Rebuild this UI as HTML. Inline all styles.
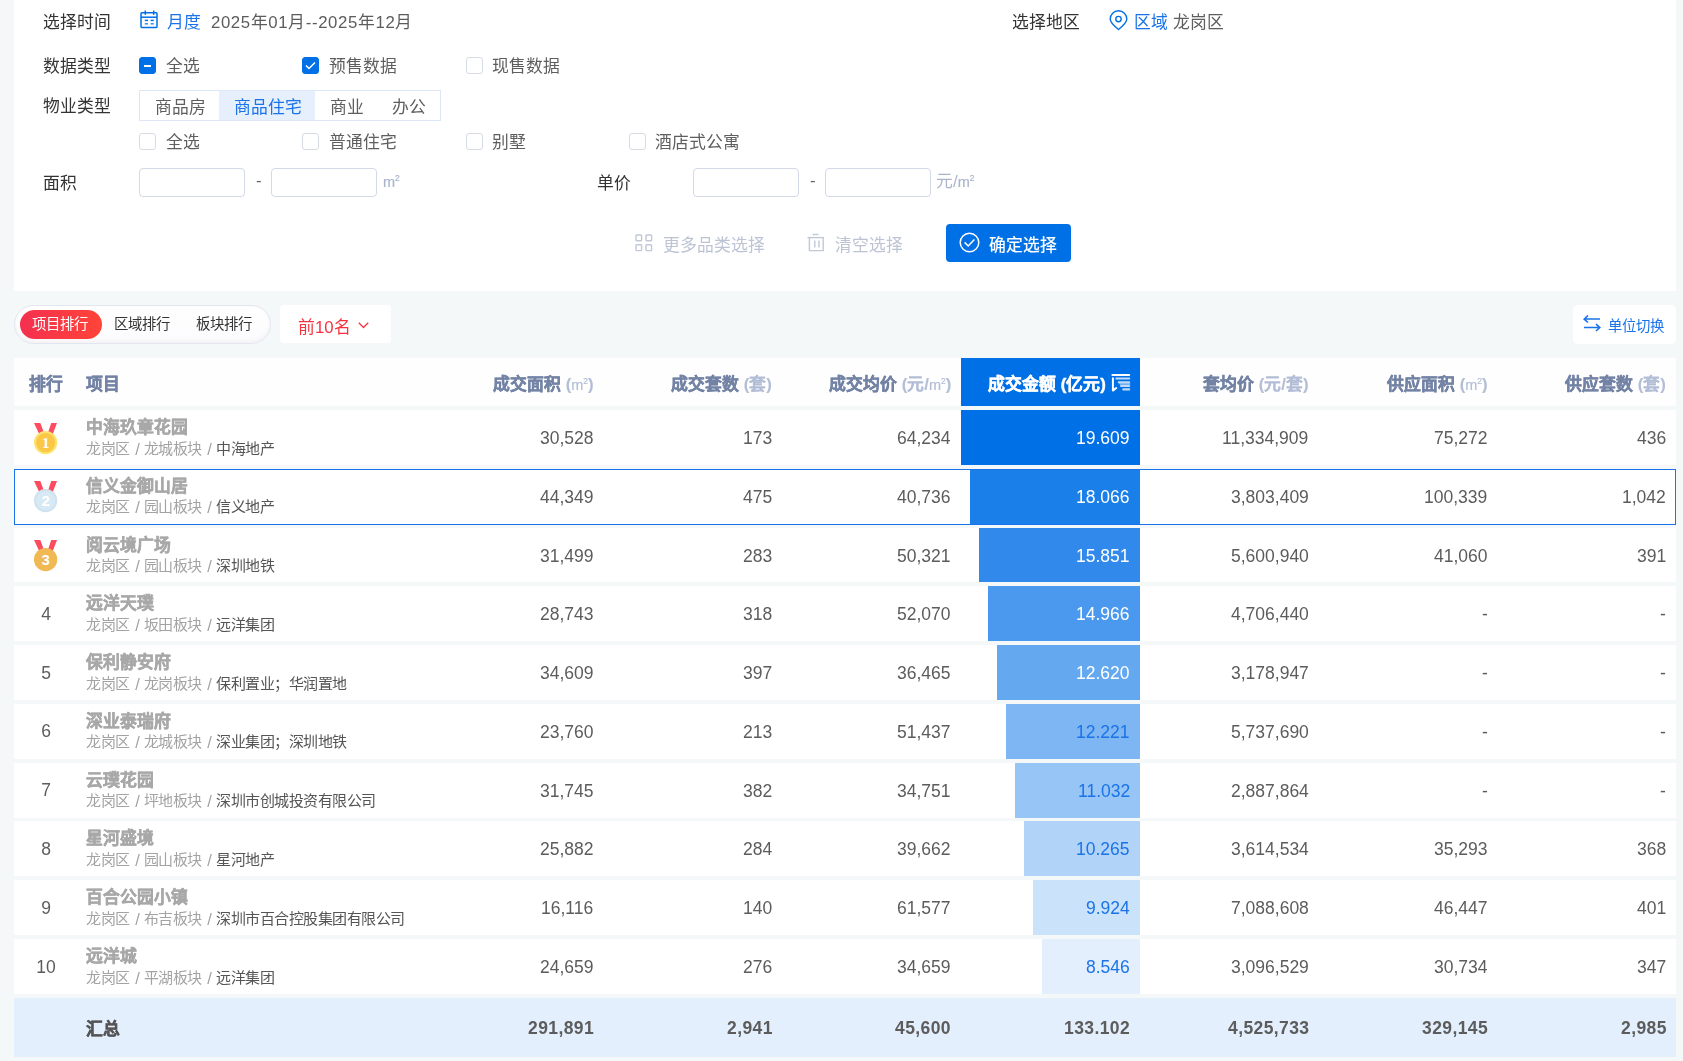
<!DOCTYPE html>
<html lang="zh-CN"><head><meta charset="utf-8">
<style>
html,body{margin:0;padding:0}
body{width:1683px;height:1061px;overflow:hidden;background:#f5f8f9;position:relative;font-family:"Liberation Sans",sans-serif;color:#333}
.a{position:absolute}
.t{position:absolute;white-space:nowrap;line-height:24px;height:24px;will-change:transform}
.f17{font-size:16.8px}
.f14{font-size:14.4px}
.card{position:absolute;left:14px;top:0;width:1662px;height:291px;background:#fff}
.cb{position:absolute;width:15px;height:15px;border:1px solid #d6dbe5;border-radius:3px;background:#fff}
.cb.on{background:#0070e6;border-color:#0070e6}
.inp{position:absolute;width:104px;height:27px;border:1px solid #d3d9e6;border-radius:4px;background:#fff}
.gray{color:#b8c1d3}
.blue{color:#1a73e8}
.hd{font-weight:bold;color:#7383a5;-webkit-text-stroke-width:0.45px}
.u{color:#b3bed6;-webkit-text-stroke-width:0.1px}
.num{font-size:17.5px;color:#5c5c5c}
.pn{font-weight:bold;color:#a8a8a8;-webkit-text-stroke-width:0.45px}
.sub{color:#a3a3a3}
.medal{width:24px;height:32px}
.medal:before{content:"";position:absolute;left:1px;top:0;width:22px;height:12px;background:#f5495c;clip-path:polygon(0 0,6.5px 0,12px 12px,10px 12px);}
.medal:after{content:"";position:absolute;left:1px;top:0;width:22px;height:12px;background:#f5495c;clip-path:polygon(22px 0,15.5px 0,10px 12px,12px 12px);}
.medal i{position:absolute;left:0;top:8px;width:23px;height:23px;border-radius:50%;font-style:normal;color:#fff;font-weight:bold;font-size:13px;line-height:23px;text-align:center;box-sizing:border-box}
.m1 i{background:#f6c24e;border:2px solid #fcd96a}
.m2 i{background:#d6e8f3;border:2px solid #dcedf7}
.m3 i{background:#f2b652;border:2px solid #f6c46a}
.m2{font-weight:normal;-webkit-text-stroke-width:0.2px;font-size:14.5px}
.m2 sup{font-size:8.5px;vertical-align:6px;line-height:0;margin-left:0}
.sub{font-size:15px;letter-spacing:-0.5px}
.sl{font-style:normal;display:inline-block;padding:0 5.4px 0 5.4px;transform:scale(1.1,1.15)}
</style></head><body>
<div class="card"></div>

<!-- row 1 -->
<div class="t f17" style="left:43px;top:10.5px">选择时间</div>
<svg class="a" style="left:140px;top:10px" width="18" height="19" viewBox="0 0 18 19" fill="none" stroke="#0070e6" stroke-width="1.5">
 <rect x="1" y="2.8" width="16" height="14.6" rx="0.8"/>
 <line x1="5.3" y1="0.5" x2="5.3" y2="4.8"/><line x1="13.7" y1="0.5" x2="13.7" y2="4.8"/>
 <line x1="1" y1="7.2" x2="17" y2="7.2"/>
 <line x1="4.8" y1="10.4" x2="8" y2="10.4"/><line x1="10.6" y1="10.4" x2="13.8" y2="10.4"/>
 <line x1="4.8" y1="13.8" x2="8" y2="13.8" stroke-opacity="0.8"/><line x1="10.6" y1="13.8" x2="13.8" y2="13.8" stroke-opacity="0.8"/>
</svg>
<div class="t f17 blue" style="left:167px;top:10.5px">月度</div>
<div class="t f17" style="left:211px;top:10.5px;color:#5c5c5c;letter-spacing:0.6px">2025年01月--2025年12月</div>

<div class="t f17" style="left:1012px;top:10.5px">选择地区</div>
<svg class="a" style="left:1108.5px;top:9.5px" width="19" height="21" viewBox="0 0 19 21" fill="none" stroke="#0070e6" stroke-width="1.4">
 <path d="M9.5 19.5 C5.5 16.4 1.2 13 1.2 9.1 A8.3 8.3 0 0 1 17.8 9.1 C17.8 13 13.5 16.4 9.5 19.5 Z"/>
 <circle cx="9.5" cy="9.1" r="2.7"/>
</svg>
<div class="t f17 blue" style="left:1134px;top:10.5px">区域</div>
<div class="t f17" style="left:1173px;top:10.5px;color:#5e5e5e">龙岗区</div>

<!-- row 2 -->
<div class="t f17" style="left:43px;top:54.5px">数据类型</div>
<div class="cb on" style="left:139px;top:57px"><div class="a" style="left:4px;top:6.5px;width:7px;height:2px;background:#fff"></div></div>
<div class="t f17" style="left:166px;top:54.5px;color:#5e5e5e">全选</div>
<div class="cb on" style="left:302px;top:57px"><svg class="a" style="left:2px;top:3px" width="11" height="9" viewBox="0 0 11 9" fill="none" stroke="#fff" stroke-width="1.5"><path d="M1 4.5 L4 7.5 L10 1.5"/></svg></div>
<div class="t f17" style="left:329px;top:54.5px;color:#5e5e5e">预售数据</div>
<div class="cb" style="left:466px;top:57px"></div>
<div class="t f17" style="left:492px;top:54.5px;color:#5e5e5e">现售数据</div>

<!-- row 3 -->
<div class="t f17" style="left:43px;top:94.5px">物业类型</div>
<div class="a" style="left:139px;top:90px;width:300px;height:29px;border:1px solid #dce8f8"></div>
<div class="a" style="left:219px;top:91px;width:96px;height:29px;background:#e5f0fc"></div>
<div class="t f17" style="left:155px;top:95.5px;color:#5e5e5e">商品房</div>
<div class="t f17 blue" style="left:234px;top:95.5px">商品住宅</div>
<div class="t f17" style="left:330px;top:95.5px;color:#5e5e5e">商业</div>
<div class="t f17" style="left:392px;top:95.5px;color:#5e5e5e">办公</div>

<!-- row 4 -->
<div class="cb" style="left:139px;top:133px"></div>
<div class="t f17" style="left:166px;top:130.5px;color:#5e5e5e">全选</div>
<div class="cb" style="left:302px;top:133px"></div>
<div class="t f17" style="left:329px;top:130.5px;color:#5e5e5e">普通住宅</div>
<div class="cb" style="left:466px;top:133px"></div>
<div class="t f17" style="left:492px;top:130.5px;color:#5e5e5e">别墅</div>
<div class="cb" style="left:629px;top:133px"></div>
<div class="t f17" style="left:655px;top:130.5px;color:#5e5e5e">酒店式公寓</div>

<!-- row 5 -->
<div class="t f17" style="left:43px;top:171.5px">面积</div>
<div class="inp" style="left:139px;top:168px"></div>
<div class="t f17" style="left:256px;top:168.5px;color:#666">-</div>
<div class="inp" style="left:271px;top:168px"></div>
<div class="t f17" style="left:383px;top:169.5px;color:#aab5cc"><span class="m2">m<sup>2</sup></span></div>
<div class="t f17" style="left:597px;top:171.5px">单价</div>
<div class="inp" style="left:693px;top:168px"></div>
<div class="t f17" style="left:810px;top:168.5px;color:#666">-</div>
<div class="inp" style="left:825px;top:168px"></div>
<div class="t f17" style="left:936px;top:169.5px;color:#aab5cc">元/<span class="m2">m<sup>2</sup></span></div>

<!-- row 6 buttons -->
<svg class="a" style="left:634.5px;top:234px" width="18" height="18" viewBox="0 0 18 18" fill="none" stroke="#c0c8d8" stroke-width="1.4">
 <rect x="1" y="1" width="5.6" height="5.8" rx="0.8"/><rect x="11" y="1" width="5.6" height="5.8" rx="0.8"/>
 <rect x="1" y="10.8" width="5.6" height="5.8" rx="0.8"/><rect x="11" y="10.8" width="5.6" height="5.8" rx="0.8"/>
</svg>
<div class="t f17" style="left:663px;top:233.5px;color:#bcc4d4">更多品类选择</div>
<svg class="a" style="left:807px;top:233px" width="18" height="19" viewBox="0 0 18 19" fill="none" stroke="#c0c8d8" stroke-width="1.4">
 <line x1="5.5" y1="1.5" x2="11.5" y2="1.5"/><line x1="0.5" y1="4.6" x2="17" y2="4.6"/>
 <path d="M2.4 4.6 V17.6 H16.2 V4.6"/><line x1="7.8" y1="7.5" x2="7.8" y2="14.5"/><line x1="12" y1="7.5" x2="12" y2="14.5"/>
</svg>
<div class="t f17" style="left:835px;top:233.5px;color:#bcc4d4">清空选择</div>
<div class="a" style="left:946px;top:224px;width:125px;height:38px;border-radius:4px;background:#0070e6"></div>
<svg class="a" style="left:959px;top:232px" width="21" height="21" viewBox="0 0 21 21" fill="none" stroke="#fff" stroke-width="1.5">
 <circle cx="10.5" cy="10.5" r="9.3"/><path d="M5.6 10.4 L9.2 14 L15.4 7.6"/>
</svg>
<div class="t f17" style="left:989px;top:233.5px;color:#fff;-webkit-text-stroke-width:0.2px">确定选择</div>

<!-- TOOLBAR -->
<!--TOOLBAR-->
<div class="a" style="left:14px;top:305px;width:255px;height:37px;border:1px solid #e3e6ee;border-radius:20px;background:linear-gradient(#fff,#fbfbfd);box-shadow:inset 0 -2px 4px rgba(0,0,0,0.04)"></div>
<div class="a" style="left:20px;top:310px;width:82px;height:29px;border-radius:15px;background:linear-gradient(90deg,#f4304f,#ff4438)"></div>
<div class="t f14" style="left:32px;top:312px;color:#fff">项目排行</div>
<div class="t f14" style="left:114px;top:312px;color:#333">区域排行</div>
<div class="t f14" style="left:196px;top:312px;color:#333">板块排行</div>
<div class="a" style="left:280px;top:305px;width:111px;height:38px;border-radius:4px;background:#fff"></div>
<div class="t f17" style="left:298px;top:315.5px;color:#f5333f">前10名</div>
<svg class="a" style="left:358px;top:322px" width="11" height="7" viewBox="0 0 11 7" fill="none" stroke="#f5333f" stroke-width="1.3"><path d="M0.8 0.8 L5.5 5.5 L10.2 0.8"/></svg>
<div class="a" style="left:1573px;top:305px;width:103px;height:39px;border-radius:5px;background:#fff"></div>
<svg class="a" style="left:1583px;top:315px" width="18" height="17" viewBox="0 0 18 17" fill="none" stroke="#1a73e8" stroke-width="1.6"><path d="M17 4 H1.5 M5 0.5 L1.2 4.2 L5 7.5"/><path d="M1 12.5 H16.5 M13 9 L16.8 12.6 L13 16"/></svg>
<div class="t f14 blue" style="left:1608px;top:314px">单位切换</div>


<!-- TABLE -->
<!--TABLE-->
<div class="a" style="left:14px;top:358px;width:1662px;height:48px;background:#fefefe"></div>
<div class="a" style="left:961px;top:358px;width:179px;height:48px;background:#0070e6"></div>
<div class="t f17 hd" style="left:29px;top:373px">排行</div>
<div class="t f17 hd" style="left:86px;top:373px">项目</div>
<div class="t f17 hd" style="right:1089.5px;top:373px">成交面积 <span class="u">(<span class="m2">m<sup>2</sup></span>)</span></div>
<div class="t f17 hd" style="right:910.7px;top:373px">成交套数 <span class="u">(套)</span></div>
<div class="t f17 hd" style="right:732px;top:373px">成交均价 <span class="u">(元/<span class="m2">m<sup>2</sup></span>)</span></div>
<div class="t f17 hd" style="right:577px;top:373px;color:#fff">成交金额 (亿元)</div>
<svg class="a" style="left:1111px;top:373px" width="20" height="20" viewBox="0 0 20 20"><rect x="0.4" y="1" width="18.8" height="2" rx="1" fill="#fff"/><path d="M1.9 5.2 V17.6 L5.2 15" fill="none" stroke="#fff" stroke-width="2" stroke-linecap="round" stroke-linejoin="round"/><g fill="#fff" opacity="0.75"><rect x="4.3" y="4.4" width="14.9" height="2.1" rx="1"/><rect x="6.7" y="8.2" width="12.5" height="2" rx="1"/><rect x="9" y="11.9" width="10.2" height="2" rx="1"/><rect x="11.2" y="15.3" width="8" height="2.2" rx="1"/></g><path d="M7.5 10 H19.2 V12 H9Z" fill="#fff" opacity="0.45"/></svg>
<div class="t f17 hd" style="right:374.4000000000001px;top:373px">套均价 <span class="u">(元/套)</span></div>
<div class="t f17 hd" style="right:195.5px;top:373px">供应面积 <span class="u">(<span class="m2">m<sup>2</sup></span>)</span></div>
<div class="t f17 hd" style="right:17px;top:373px">供应套数 <span class="u">(套)</span></div>
<div class="a" style="left:14px;top:410.00px;width:1662px;height:54.9px;background:#fff"></div>
<div class="a" style="left:961px;top:410.00px;width:179px;height:54.9px;background:#0070e6"></div>
<svg class="a" style="left:34px;top:422.50px" width="24" height="32" viewBox="0 0 24 32"><path d="M0 0H6.3L10.4 11H5.2Z M17.2 0H23L18.8 11H13.6Z" fill="#fd4c60"/><circle cx="11.6" cy="19.6" r="11.65" fill="#fbe56e"/><circle cx="11.6" cy="19.6" r="9.6" fill="#fac846"/><text x="11.7" y="25" text-anchor="middle" font-family="Liberation Serif" font-weight="bold" font-size="15" fill="#fff">1</text></svg>
<div class="t f17 pn" style="left:86px;top:416.00px">中海玖章花园</div>
<div class="t f14 sub" style="left:86px;top:436.50px">龙岗区<i class="sl">/</i>龙城板块<i class="sl">/</i><span style="color:#555">中海地产</span></div>
<div class="t num" style="right:1089.5px;top:426.00px">30,528</div>
<div class="t num" style="right:910.7px;top:426.00px">173</div>
<div class="t num" style="right:732px;top:426.00px">64,234</div>
<div class="t num" style="right:553px;top:426.00px;color:#fff">19.609</div>
<div class="t num" style="right:374.4000000000001px;top:426.00px">11,334,909</div>
<div class="t num" style="right:195.5px;top:426.00px">75,272</div>
<div class="t num" style="right:17px;top:426.00px">436</div>
<div class="a" style="left:14px;top:468.78px;width:1660px;height:53.9px;background:#fff;border:1px solid #1a73e8"></div>
<div class="a" style="left:970px;top:469.78px;width:170px;height:53.9px;background:#1a7fe9"></div>
<svg class="a" style="left:34px;top:481.28px" width="24" height="32" viewBox="0 0 24 32"><path d="M0 0H6.3L10.4 11H5.2Z M17.2 0H23L18.8 11H13.6Z" fill="#fd4c60"/><circle cx="11.6" cy="19.6" r="11.65" fill="#cfe2ee"/><circle cx="11.6" cy="19.6" r="9.6" fill="#d7e9f4"/><text x="11.7" y="25" text-anchor="middle" font-family="Liberation Sans" font-weight="bold" font-size="15" fill="#fff">2</text></svg>
<div class="t f17 pn" style="left:86px;top:474.78px">信义金御山居</div>
<div class="t f14 sub" style="left:86px;top:495.28px">龙岗区<i class="sl">/</i>园山板块<i class="sl">/</i><span style="color:#555">信义地产</span></div>
<div class="t num" style="right:1089.5px;top:484.78px">44,349</div>
<div class="t num" style="right:910.7px;top:484.78px">475</div>
<div class="t num" style="right:732px;top:484.78px">40,736</div>
<div class="t num" style="right:553px;top:484.78px;color:#fff">18.066</div>
<div class="t num" style="right:374.4000000000001px;top:484.78px">3,803,409</div>
<div class="t num" style="right:195.5px;top:484.78px">100,339</div>
<div class="t num" style="right:17px;top:484.78px">1,042</div>
<div class="a" style="left:14px;top:527.56px;width:1662px;height:54.9px;background:#fff"></div>
<div class="a" style="left:979px;top:527.56px;width:161px;height:54.9px;background:#3189eb"></div>
<svg class="a" style="left:34px;top:540.06px" width="24" height="32" viewBox="0 0 24 32"><path d="M0 0H6.3L10.4 11H5.2Z M17.2 0H23L18.8 11H13.6Z" fill="#fd4c60"/><circle cx="11.6" cy="19.6" r="11.65" fill="#f0b954"/><circle cx="11.6" cy="19.6" r="9.6" fill="#f0b954"/><text x="11.7" y="25" text-anchor="middle" font-family="Liberation Sans" font-weight="bold" font-size="15" fill="#fff">3</text></svg>
<div class="t f17 pn" style="left:86px;top:533.56px">阅云境广场</div>
<div class="t f14 sub" style="left:86px;top:554.06px">龙岗区<i class="sl">/</i>园山板块<i class="sl">/</i><span style="color:#555">深圳地铁</span></div>
<div class="t num" style="right:1089.5px;top:543.56px">31,499</div>
<div class="t num" style="right:910.7px;top:543.56px">283</div>
<div class="t num" style="right:732px;top:543.56px">50,321</div>
<div class="t num" style="right:553px;top:543.56px;color:#fff">15.851</div>
<div class="t num" style="right:374.4000000000001px;top:543.56px">5,600,940</div>
<div class="t num" style="right:195.5px;top:543.56px">41,060</div>
<div class="t num" style="right:17px;top:543.56px">391</div>
<div class="a" style="left:14px;top:586.34px;width:1662px;height:54.9px;background:#fff"></div>
<div class="a" style="left:988px;top:586.34px;width:152px;height:54.9px;background:#4a99ee"></div>
<div class="t num" style="left:14px;width:64px;text-align:center;top:601.84px">4</div>
<div class="t f17 pn" style="left:86px;top:592.34px">远洋天璞</div>
<div class="t f14 sub" style="left:86px;top:612.84px">龙岗区<i class="sl">/</i>坂田板块<i class="sl">/</i><span style="color:#555">远洋集团</span></div>
<div class="t num" style="right:1089.5px;top:602.34px">28,743</div>
<div class="t num" style="right:910.7px;top:602.34px">318</div>
<div class="t num" style="right:732px;top:602.34px">52,070</div>
<div class="t num" style="right:553px;top:602.34px;color:#fff">14.966</div>
<div class="t num" style="right:374.4000000000001px;top:602.34px">4,706,440</div>
<div class="t num" style="right:195.5px;top:602.34px">-</div>
<div class="t num" style="right:17px;top:602.34px">-</div>
<div class="a" style="left:14px;top:645.12px;width:1662px;height:54.9px;background:#fff"></div>
<div class="a" style="left:997px;top:645.12px;width:143px;height:54.9px;background:#64a8f0"></div>
<div class="t num" style="left:14px;width:64px;text-align:center;top:660.62px">5</div>
<div class="t f17 pn" style="left:86px;top:651.12px">保利静安府</div>
<div class="t f14 sub" style="left:86px;top:671.62px">龙岗区<i class="sl">/</i>龙岗板块<i class="sl">/</i><span style="color:#555">保利置业；华润置地</span></div>
<div class="t num" style="right:1089.5px;top:661.12px">34,609</div>
<div class="t num" style="right:910.7px;top:661.12px">397</div>
<div class="t num" style="right:732px;top:661.12px">36,465</div>
<div class="t num" style="right:553px;top:661.12px;color:#fff">12.620</div>
<div class="t num" style="right:374.4000000000001px;top:661.12px">3,178,947</div>
<div class="t num" style="right:195.5px;top:661.12px">-</div>
<div class="t num" style="right:17px;top:661.12px">-</div>
<div class="a" style="left:14px;top:703.90px;width:1662px;height:54.9px;background:#fff"></div>
<div class="a" style="left:1006px;top:703.90px;width:134px;height:54.9px;background:#7db6f2"></div>
<div class="t num" style="left:14px;width:64px;text-align:center;top:719.40px">6</div>
<div class="t f17 pn" style="left:86px;top:709.90px">深业泰瑞府</div>
<div class="t f14 sub" style="left:86px;top:730.40px">龙岗区<i class="sl">/</i>龙城板块<i class="sl">/</i><span style="color:#555">深业集团；深圳地铁</span></div>
<div class="t num" style="right:1089.5px;top:719.90px">23,760</div>
<div class="t num" style="right:910.7px;top:719.90px">213</div>
<div class="t num" style="right:732px;top:719.90px">51,437</div>
<div class="t num" style="right:553px;top:719.90px;color:#1a73e8">12.221</div>
<div class="t num" style="right:374.4000000000001px;top:719.90px">5,737,690</div>
<div class="t num" style="right:195.5px;top:719.90px">-</div>
<div class="t num" style="right:17px;top:719.90px">-</div>
<div class="a" style="left:14px;top:762.68px;width:1662px;height:54.9px;background:#fff"></div>
<div class="a" style="left:1015px;top:762.68px;width:125px;height:54.9px;background:#97c5f5"></div>
<div class="t num" style="left:14px;width:64px;text-align:center;top:778.18px">7</div>
<div class="t f17 pn" style="left:86px;top:768.68px">云璞花园</div>
<div class="t f14 sub" style="left:86px;top:789.18px">龙岗区<i class="sl">/</i>坪地板块<i class="sl">/</i><span style="color:#555">深圳市创城投资有限公司</span></div>
<div class="t num" style="right:1089.5px;top:778.68px">31,745</div>
<div class="t num" style="right:910.7px;top:778.68px">382</div>
<div class="t num" style="right:732px;top:778.68px">34,751</div>
<div class="t num" style="right:553px;top:778.68px;color:#1a73e8">11.032</div>
<div class="t num" style="right:374.4000000000001px;top:778.68px">2,887,864</div>
<div class="t num" style="right:195.5px;top:778.68px">-</div>
<div class="t num" style="right:17px;top:778.68px">-</div>
<div class="a" style="left:14px;top:821.46px;width:1662px;height:54.9px;background:#fff"></div>
<div class="a" style="left:1024px;top:821.46px;width:116px;height:54.9px;background:#b1d3f7"></div>
<div class="t num" style="left:14px;width:64px;text-align:center;top:836.96px">8</div>
<div class="t f17 pn" style="left:86px;top:827.46px">星河盛境</div>
<div class="t f14 sub" style="left:86px;top:847.96px">龙岗区<i class="sl">/</i>园山板块<i class="sl">/</i><span style="color:#555">星河地产</span></div>
<div class="t num" style="right:1089.5px;top:837.46px">25,882</div>
<div class="t num" style="right:910.7px;top:837.46px">284</div>
<div class="t num" style="right:732px;top:837.46px">39,662</div>
<div class="t num" style="right:553px;top:837.46px;color:#1a73e8">10.265</div>
<div class="t num" style="right:374.4000000000001px;top:837.46px">3,614,534</div>
<div class="t num" style="right:195.5px;top:837.46px">35,293</div>
<div class="t num" style="right:17px;top:837.46px">368</div>
<div class="a" style="left:14px;top:880.24px;width:1662px;height:54.9px;background:#fff"></div>
<div class="a" style="left:1033px;top:880.24px;width:107px;height:54.9px;background:#cae2fa"></div>
<div class="t num" style="left:14px;width:64px;text-align:center;top:895.74px">9</div>
<div class="t f17 pn" style="left:86px;top:886.24px">百合公园小镇</div>
<div class="t f14 sub" style="left:86px;top:906.74px">龙岗区<i class="sl">/</i>布吉板块<i class="sl">/</i><span style="color:#555">深圳市百合控股集团有限公司</span></div>
<div class="t num" style="right:1089.5px;top:896.24px">16,116</div>
<div class="t num" style="right:910.7px;top:896.24px">140</div>
<div class="t num" style="right:732px;top:896.24px">61,577</div>
<div class="t num" style="right:553px;top:896.24px;color:#1a73e8">9.924</div>
<div class="t num" style="right:374.4000000000001px;top:896.24px">7,088,608</div>
<div class="t num" style="right:195.5px;top:896.24px">46,447</div>
<div class="t num" style="right:17px;top:896.24px">401</div>
<div class="a" style="left:14px;top:939.02px;width:1662px;height:54.9px;background:#fff"></div>
<div class="a" style="left:1042px;top:939.02px;width:98px;height:54.9px;background:#e3effc"></div>
<div class="t num" style="left:14px;width:64px;text-align:center;top:954.52px">10</div>
<div class="t f17 pn" style="left:86px;top:945.02px">远洋城</div>
<div class="t f14 sub" style="left:86px;top:965.52px">龙岗区<i class="sl">/</i>平湖板块<i class="sl">/</i><span style="color:#555">远洋集团</span></div>
<div class="t num" style="right:1089.5px;top:955.02px">24,659</div>
<div class="t num" style="right:910.7px;top:955.02px">276</div>
<div class="t num" style="right:732px;top:955.02px">34,659</div>
<div class="t num" style="right:553px;top:955.02px;color:#1a73e8">8.546</div>
<div class="t num" style="right:374.4000000000001px;top:955.02px">3,096,529</div>
<div class="t num" style="right:195.5px;top:955.02px">30,734</div>
<div class="t num" style="right:17px;top:955.02px">347</div>
<div class="a" style="left:14px;top:998px;width:1662px;height:58.5px;background:#e3effc"></div>
<div class="t f17" style="left:86px;top:1018px;font-weight:bold;color:#555;-webkit-text-stroke-width:0.45px">汇总</div>
<div class="t num" style="right:1089.1px;top:1016px;font-weight:bold;letter-spacing:0.4px">291,891</div>
<div class="t num" style="right:910.3000000000001px;top:1016px;font-weight:bold;letter-spacing:0.4px">2,941</div>
<div class="t num" style="right:731.6px;top:1016px;font-weight:bold;letter-spacing:0.4px">45,600</div>
<div class="t num" style="right:552.6px;top:1016px;font-weight:bold;letter-spacing:0.4px">133.102</div>
<div class="t num" style="right:374.0000000000001px;top:1016px;font-weight:bold;letter-spacing:0.4px">4,525,733</div>
<div class="t num" style="right:195.1px;top:1016px;font-weight:bold;letter-spacing:0.4px">329,145</div>
<div class="t num" style="right:16.6px;top:1016px;font-weight:bold;letter-spacing:0.4px">2,985</div>
<!--/TABLE-->
</body></html>
